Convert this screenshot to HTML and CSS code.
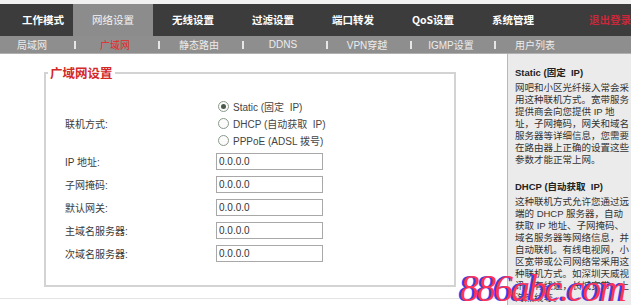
FILE: index.html
```html
<!DOCTYPE html>
<html lang="zh-CN">
<head>
<meta charset="utf-8">
<title>广域网设置</title>
<link rel="stylesheet" href="styles.css">
</head>
<body>
<div class="page">
  <div class="topstrip"></div>
  <nav class="mainnav">
    <div class="tab first">工作模式</div>
    <div class="tab active">网络设置</div>
    <div class="tab">无线设置</div>
    <div class="tab">过滤设置</div>
    <div class="tab">端口转发</div>
    <div class="tab">QoS设置</div>
    <div class="tab">系统管理</div>
    <div class="tab logout">退出登录</div>
  </nav>
  <nav class="subnav">
    <span class="sub first">局域网</span><span class="sep"></span>
    <span class="sub active">广域网</span><span class="sep"></span>
    <span class="sub">静态路由</span><span class="sep"></span>
    <span class="sub">DDNS</span><span class="sep"></span>
    <span class="sub">VPN穿越</span><span class="sep"></span>
    <span class="sub">IGMP设置</span><span class="sep"></span>
    <span class="sub">用户列表</span>
  </nav>
  <div class="content">
    <main class="main">
      <fieldset class="panel">
        <legend class="legend">广域网设置</legend>
        <div class="form">
          <div class="row radiorow">
            <div class="label">联机方式:</div>
            <div class="radios">
              <label class="radio"><input type="radio" name="mode" class="rb" checked>Static (固定&nbsp; IP)</label>
              <label class="radio"><input type="radio" name="mode" class="rb">DHCP (自动获取&nbsp; IP)</label>
              <label class="radio"><input type="radio" name="mode" class="rb">PPPoE (ADSL 拨号)</label>
            </div>
          </div>
          <div class="row inputrow">
            <div class="label">IP 地址:</div>
            <div class="field">0.0.0.0</div>
          </div>
          <div class="row inputrow">
            <div class="label">子网掩码:</div>
            <div class="field">0.0.0.0</div>
          </div>
          <div class="row inputrow">
            <div class="label">默认网关:</div>
            <div class="field">0.0.0.0</div>
          </div>
          <div class="row inputrow">
            <div class="label">主域名服务器:</div>
            <div class="field">0.0.0.0</div>
          </div>
          <div class="row inputrow">
            <div class="label">次域名服务器:</div>
            <div class="field">0.0.0.0</div>
          </div>
        </div>
      </fieldset>
      <div class="footline"></div>
    </main>
    <aside class="help">
      <h3 class="help-title">Static (固定&nbsp; IP)</h3>
      <p class="help-text">网吧和小区光纤接入常会采<br>用这种联机方式。宽带服务<br>提供商会向您提供 IP 地<br>址，子网掩码，网关和域名<br>服务器等详细信息，您需要<br>在路由器上正确的设置这些<br>参数才能正常上网。</p>
      <h3 class="help-title second">DHCP (自动获取&nbsp; IP)</h3>
      <p class="help-text">这种联机方式允许您通过远<br>端的 DHCP 服务器，自动<br>获取 IP 地址、子网掩码、<br>域名服务器等网络信息，并<br>自动联机。有线电视网，小<br>区宽带或公司网络常采用这<br>种联机方式。如深圳天威视<br>讯，有线通，长城宽带，上<br>海热线等。</p>
    </aside>
  </div>
  <div class="watermark">886abc.com</div>
</div>
</body>
</html>
```
FILE: styles.css
```css
html, body {
  margin: 0;
  padding: 0;
  background: #ffffff;
}
body {
  font-family: "Liberation Sans", "Noto Sans CJK SC", sans-serif;
  color: #333;
  overflow: hidden;
}
.page {
  position: relative;
  width: 631px;
  height: 305px;
  overflow: hidden;
  display: flex;
  flex-direction: column;
}
.topstrip {
  height: 4px;
  background: #f1f1f1;
}
.mainnav {
  display: flex;
  height: 32px;
  background: #3c3c3c;
}
.tab {
  width: 80px;
  flex: none;
  text-align: center;
  line-height: 32px;
  font-size: 10.5px;
  font-weight: bold;
  color: #ffffff;
  font-family: "Noto Sans CJK SC", "Liberation Sans", sans-serif;
}
.tab.first {
  width: 73px;
  padding-right: 9px;
  box-sizing: border-box;
  text-align: right;
}
.tab.active {
  background: #8c8c8c;
  font-weight: normal;
  color: #f2f2f2;
}
.tab.logout {
  width: auto;
  padding-left: 36px;
  text-align: left;
  color: #c8283a;
}
.subnav {
  display: flex;
  align-items: center;
  height: 18px;
  background: #8e8e8e;
  border-bottom: 1px solid #b0b0b0;
  box-sizing: border-box;
}
.sub {
  width: 82px;
  padding-right: 4px;
  box-sizing: border-box;
  flex: none;
  text-align: center;
  font-size: 10px;
  color: #ececec;
  font-family: "Liberation Sans", "Noto Sans CJK SC", sans-serif;
}
.sub.first {
  width: 74px;
  padding-right: 10px;
}
.sub.active {
  color: #e8262a;
}
.sep {
  width: 2px;
  height: 8px;
  background: #e6e6e6;
  flex: none;
}
.content {
  flex: 1;
  display: flex;
  min-height: 0;
}
.main {
  width: 507px;
  flex: none;
  background: #ffffff;
  display: flex;
  flex-direction: column;
}
.panel {
  margin: 12px 0 0 44px;
  width: 412px;
  box-sizing: border-box;
  border: 2px solid #d3d3d3;
  padding: 18px 0 23px 0;
  min-width: 0;
}
.legend {
  padding: 0 2px;
  margin-left: 2px;
  font-size: 12.5px;
  line-height: 14px;
  font-weight: bold;
  color: #d42828;
  font-family: "Noto Sans CJK SC", "Liberation Sans", sans-serif;
}
.form {
  display: flex;
  flex-direction: column;
  padding-left: 19px;
}
.row {
  display: grid;
  grid-template-columns: 151px 107px;
  align-items: center;
}
.inputrow {
  margin-top: 6px;
}
.radiorow + .inputrow {
  margin-top: 4px;
}
.label {
  font-size: 10px;
  color: #3a3a3a;
}
.radios {
  display: flex;
  flex-direction: column;
  white-space: nowrap;
}
.radio {
  display: flex;
  align-items: center;
  height: 17px;
  font-size: 10px;
  color: #444;
  white-space: nowrap;
}
.rb {
  appearance: none;
  -webkit-appearance: none;
  flex: none;
  width: 11px;
  height: 11px;
  margin: 0 4px 0 2px;
  border: 1px solid #8a9a8a;
  border-radius: 50%;
  background: #fbfbfb;
  box-sizing: border-box;
  display: flex;
  align-items: center;
  justify-content: center;
}
.rb:checked::after {
  content: "";
  width: 5px;
  height: 5px;
  border-radius: 50%;
  background: #4c5a4c;
}
.field {
  height: 17px;
  box-sizing: border-box;
  border: 1px solid #a8a8a8;
  background: #ffffff;
  font-size: 10px;
  line-height: 15px;
  padding-left: 2px;
  color: #333;
}
.footline {
  margin-top: 11px;
  height: 1px;
  background: #e3e3e3;
}
.help {
  flex: 1;
  background: #ebebeb;
  border-left: 1px solid #b8b8b8;
  padding: 13px 0 0 7px;
  overflow: hidden;
}
.help-title {
  margin: 0;
  font-size: 9.5px;
  line-height: 12px;
  font-weight: bold;
  color: #222;
}
.help-title.second {
  margin-top: 15px;
}
.help-text {
  margin: 3px 0 0 0;
  font-size: 9.5px;
  line-height: 12px;
  color: #333;
  white-space: nowrap;
}
.watermark {
  position: absolute;
  left: 460px;
  top: 269px;
  font-family: "Liberation Serif", serif;
  font-style: italic;
  font-size: 38px;
  line-height: 1;
  letter-spacing: -2px;
  color: #ff3355;
  text-shadow: -2px 0 0 #3344ff;
  white-space: nowrap;
}
```
